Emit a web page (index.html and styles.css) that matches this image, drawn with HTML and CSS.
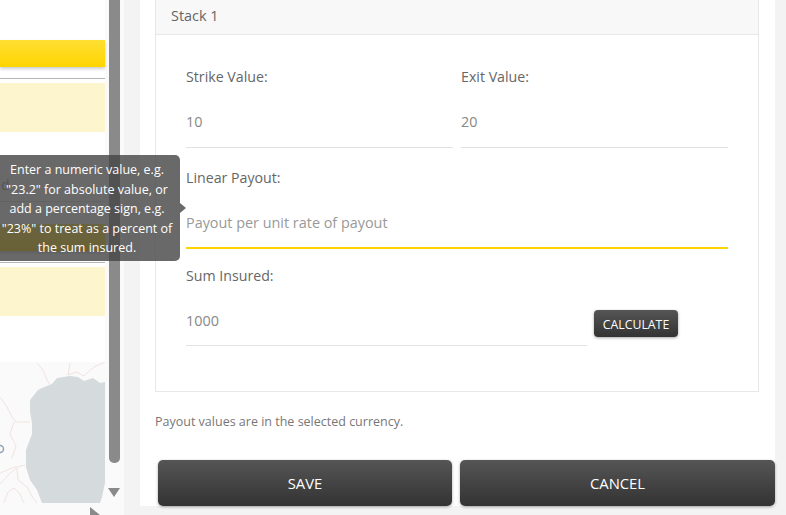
FILE: index.html
```html
<!DOCTYPE html>
<html lang="en">
  <head>
    <meta charset="UTF-8" />
    <meta name="viewport" content="width=device-width, initial-scale=1.0" />
    <title>Stack payout</title>
    <link rel="stylesheet" href="styles.css">
  </head>
  <body>
    <div class="sidebar">
      <div class="sidebar-list">
        <div class="yellow-bar"></div>
        <div class="divider"></div>
        <div class="pale-box"></div>
        <div class="sidebar-text">d</div>
        <div class="text-line"></div>
        <div class="yellow-bar"></div>
        <div class="divider"></div>
        <div class="pale-box"></div>
        <div class="map">
          <svg width="105" height="141" viewBox="0 0 105 141">
            <g fill="none" stroke="#f1e3e1" stroke-width="1">
              <path d="M37 1 L43 8 L47 18 L50 23" />
              <path d="M70 1 L68 13 L76 10 L84 14 L90 8 L96 4 L105 0" />
              <path d="M0 35 L7 45 L12 55 L16 60 L30 60" />
              <path d="M14 60 L10 72 L16 84 L12 96" />
              <path d="M0 111 L12 106 L25 103" />
              <path d="M0 122 L10 111 L17 106 L18 118 L27 125 L33 136 L37 141" />
              <path d="M4 141 L8 130 L14 126 L20 132 L24 141" />
            </g>
            <path fill="#d5dadc" d="M70 14 L78 15 L84 19 L93 16 L100 21 L105 20 L105 121 L102 135 L100 141 L42 141 L37 128 L30 118 L26 105 L26 88 L32 72 L32 61 L30 50 L30 38 L38 28 L42 26 L52 22 L57 16 Z" />
            <circle cx="0" cy="87" r="3.5" fill="none" stroke="#8fa3b5" stroke-width="1.5" />
          </svg>
        </div>
      </div>
      <div class="scrollbar">
        <div class="scroll-thumb"></div>
        <div class="scroll-down"></div>
      </div>
      <div class="scroll-right"></div>
    </div>

    <div class="tooltip">
      Enter a numeric value, e.g. "23.2" for absolute value, or add a percentage sign, e.g. "23%" to treat as a percent of the sum insured.
    </div>

    <div class="content">
      <div class="panel">
        <div class="stack-card">
          <div class="stack-header">Stack 1</div>
          <div class="stack-body">
            <div class="field-row row-strike">
              <div class="field">
                <label for="strike">Strike Value:</label>
                <input id="strike" type="text" value="10">
              </div>
              <div class="field">
                <label for="exit">Exit Value:</label>
                <input id="exit" type="text" value="20">
              </div>
            </div>
            <div class="field field-linear">
              <label for="linear">Linear Payout:</label>
              <input id="linear" type="text" placeholder="Payout per unit rate of payout">
            </div>
            <div class="field-row row-sum">
              <div class="field field-sum">
                <label for="sum">Sum Insured:</label>
                <input id="sum" type="text" value="1000">
              </div>
              <button class="btn btn-calc">CALCULATE</button>
            </div>
          </div>
        </div>
        <p class="note">Payout values are in the selected currency.</p>
        <div class="actions">
          <button class="btn btn-save">SAVE</button>
          <button class="btn btn-cancel">CANCEL</button>
        </div>
      </div>
    </div>
  </body>
</html>
```

FILE: styles.css
```css
html, body {
  height: 100%;
}
body {
  font-family: "Open Sans", Arial, sans-serif;
  background-color: #f3f3f3;
  color: #666;
  margin: 0;
  padding: 0;
  display: flex;
  overflow: hidden;
}
.sidebar {
  position: relative;
  width: 124px;
  height: 515px;
  flex-shrink: 0;
  display: flex;
  background: #fafafa;
}
.sidebar-list {
  width: 105px;
  height: 503px;
  padding-top: 40px;
  box-sizing: border-box;
  background: #fff;
}
.yellow-bar {
  height: 27px;
  background: linear-gradient(#ffdf33, #ffd500);
  box-shadow: 0 2px 3px rgba(0, 0, 0, 0.2);
}
.divider {
  height: 1px;
  margin-top: 11px;
  background: #b5b5b5;
}
.pale-box {
  height: 49px;
  margin-top: 4px;
  background: #fdf5cd;
}
.sidebar-text {
  height: 28px;
  margin-top: 41px;
  font-size: 14px;
  line-height: 24px;
  padding-left: 1px;
  color: #999;
}
.text-line {
  height: 1px;
  margin-bottom: 22px;
  background: #ddd;
}
.map {
  height: 141px;
  margin-top: 46px;
  background: #fafafa;
  overflow: hidden;
}
.map svg {
  display: block;
}
.scrollbar {
  position: relative;
  width: 11px;
  margin-left: 4px;
}
.scroll-thumb {
  height: 463px;
  background: #8a8a8a;
  border-radius: 0 0 5px 5px;
}
.scroll-down {
  width: 0;
  height: 0;
  margin: 25px 0 0 -1px;
  border-left: 6.5px solid transparent;
  border-right: 6.5px solid transparent;
  border-top: 9px solid #8a8a8a;
}
.scroll-right {
  position: absolute;
  left: 90px;
  top: 507px;
  width: 0;
  height: 0;
  border-top: 8px solid transparent;
  border-bottom: 8px solid transparent;
  border-left: 10px solid #8a8a8a;
}
.tooltip {
  position: absolute;
  z-index: 10;
  left: -6px;
  top: 155px;
  width: 186px;
  height: 106px;
  box-sizing: border-box;
  padding: 5px 6px;
  background: rgba(68, 68, 68, 0.8);
  border-radius: 5px;
  color: #fff;
  font-size: 12.5px;
  line-height: 19.5px;
  text-align: center;
}
.tooltip::after {
  content: "";
  position: absolute;
  left: 100%;
  top: 48px;
  border-top: 5px solid transparent;
  border-bottom: 5px solid transparent;
  border-left: 6px solid rgba(68, 68, 68, 0.8);
}
.content {
  flex: 1;
  padding: 0 11px 0 16px;
}
.panel {
  background: #fff;
  height: 506px;
  padding: 0 16px 0 15px;
  box-sizing: border-box;
  position: relative;
}
.stack-card {
  height: 392px;
  box-sizing: border-box;
  border: 1px solid #e8e8e8;
  border-top: 0;
}
.stack-header {
  height: 34px;
  line-height: 31px;
  padding-left: 15px;
  background: #f8f8f8;
  border-bottom: 1px solid #e8e8e8;
  font-size: 14.4px;
}
.stack-body {
  padding: 32px 30px 0;
}
.field-row {
  display: flex;
  gap: 8px;
}
.field {
  flex: 1;
  min-width: 0;
}
.field label {
  display: block;
  height: 20px;
  font-size: 14.2px;
  line-height: 20px;
  color: #666;
}
.field input {
  display: block;
  width: 100%;
  height: 61px;
  box-sizing: border-box;
  padding: 8px 0 0;
  border: 0;
  border-bottom: 1px solid #e2e2e2;
  outline: none;
  background: transparent;
  font-family: inherit;
  font-size: 14.4px;
  color: #888;
}
.field input::placeholder {
  color: #999;
  opacity: 1;
}
.field-linear {
  margin-top: 20px;
}
.field-linear input {
  height: 61px;
  padding-top: 10px;
  border-bottom: 2px solid #ffd500;
}
.row-sum {
  margin-top: 17px;
  align-items: flex-start;
}
.field-sum {
  flex: 0 0 401px;
}
.field-sum input {
  height: 60px;
  padding-top: 10px;
}
.btn {
  font-family: inherit;
  color: #fff;
  border: 0;
  background: linear-gradient(#555, #333);
  box-shadow: 0 1px 3px rgba(0, 0, 0, 0.35);
  padding: 0;
}
.btn-calc {
  width: 84px;
  height: 27px;
  margin: 44px 0 0 -1px;
  padding-top: 1px;
  border-radius: 4px;
  font-size: 12.3px;
}
.note {
  margin: 22px 0 0;
  font-size: 12.5px;
  line-height: 16px;
  color: #777;
}
.actions {
  position: absolute;
  left: 18px;
  right: 0;
  top: 460px;
  display: flex;
  gap: 8px;
}
.actions .btn {
  height: 46px;
  border-radius: 5px;
  font-size: 14.8px;
}
.btn-save {
  width: 294px;
}
.btn-cancel {
  flex: 1;
}
```
